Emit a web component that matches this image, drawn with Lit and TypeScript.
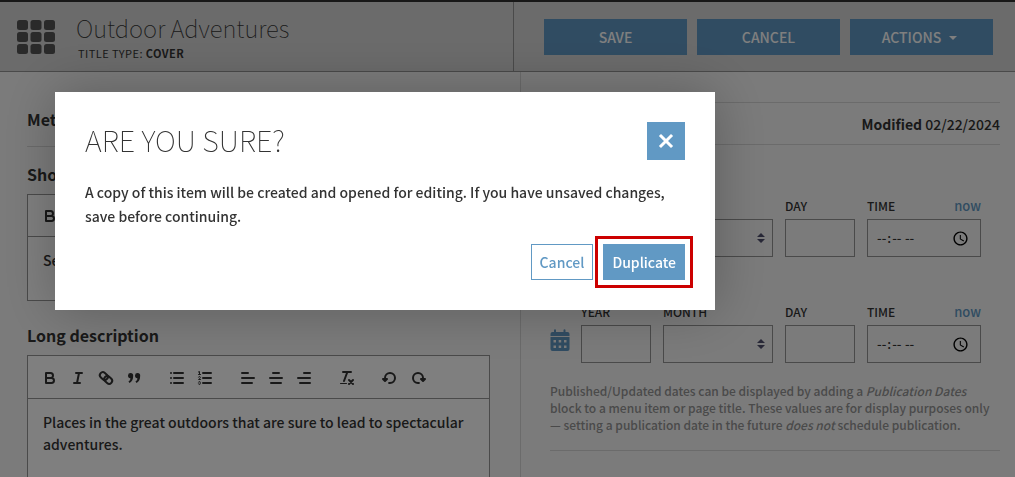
import { LitElement, html, css, svg } from "lit";
import { customElement, property } from "lit/decorators.js";

const editorIcons: Record<string, unknown> = {
  Bold: svg`<path d="M5,4H9.5A2.5,2.5,0,0,1,9.5,9H5ZM5,9h5.5A2.5,2.5,0,0,1,10.5,14H5Z"/>`,
  Italic: svg`<path d="M7,4H13M5,14H11M8,14L10,4"/>`,
  Link: svg`<g transform="rotate(42 9 9)"><rect x="1.8" y="6" width="8.6" height="6" rx="3"/><rect x="7.6" y="6" width="8.6" height="6" rx="3"/></g>`,
  Blockquote: svg`<g class="solid"><path d="M8.2,6.6A2.6,2.6,0,1,0,5.4,9.2C5.4,10.9,4.6,11.9,3.4,12.6L4.6,14C7,12.8,8.2,10.6,8.2,6.6Z"/><path d="M15.2,6.6A2.6,2.6,0,1,0,12.4,9.2C12.4,10.9,11.6,11.9,10.4,12.6L11.6,14C14,12.8,15.2,10.6,15.2,6.6Z"/></g>`,
  "Bulleted list": svg`<path d="M6,4H15M6,9H15M6,14H15M3,4H3M3,9H3M3,14H3"/>`,
  "Numbered list": svg`<path d="M7,4H15M7,9H15M7,14H15"/><path class="thin" d="M2.5,5.5H4.5M2.4,3L3.5,2.5V5.5M4.5,10.5h-2c0-.234,1.85-1.076,1.85-2.234A0.959,0.959,0,0,0,2.5,8.156M2.5,14.846a0.959,0.959,0,0,0,1.85-.109A0.7,0.7,0,0,0,3.75,14a0.688,0.688,0,0,0,.6-0.736,0.959,0.959,0,0,0-1.85-.109"/>`,
  "Align left": svg`<path d="M3,4H9M3,9H15M3,14H13"/>`,
  "Align center": svg`<path d="M6,4H12M3,9H15M4,14H14"/>`,
  "Align right": svg`<path d="M9,4H15M3,9H15M5,14H15"/>`,
  "Clear formatting": svg`<path d="M5,3H13M6,12L9.35,3M11,11L15,15M15,11L11,15"/><path class="thin" d="M2.5,14.5H8.5"/>`,
  Undo: svg`<path class="both" d="M6,10L4,12L2,10Z"/><path d="M8.09,13.91A4.6,4.6,0,0,0,9,14,5,5,0,1,0,4,9"/>`,
  Redo: svg`<path class="both" d="M12,10L14,12L16,10Z"/><path d="M9.91,13.91A4.6,4.6,0,0,1,9,14a5,5,0,1,1,5-5"/>`,
};

const toolGroups = [
  ["Bold", "Italic", "Link", "Blockquote"],
  ["Bulleted list", "Numbered list"],
  ["Align left", "Align center", "Align right"],
  ["Clear formatting"],
  ["Undo", "Redo"],
];

@customElement("rich-editor")
class RichEditor extends LitElement {
  @property() text = "";
  @property() label = "";
  @property({ type: Boolean, reflect: true }) tall = false;

  static styles = css`
    :host {
      display: block;
      border: 1px solid #949494;
      background: #fff;
    }
    .toolbar {
      display: flex;
      flex-wrap: wrap;
      gap: 15px;
      padding: 9px 8px 8px;
      border-bottom: 1px solid #949494;
    }
    :host([tall]) .toolbar {
      padding-top: 10px;
    }
    .group {
      display: flex;
    }
    button {
      width: 28px;
      height: 24px;
      padding: 3px 5px;
      border: 0;
      background: none;
    }
    svg {
      display: block;
      width: 18px;
      height: 18px;
      fill: none;
      stroke: #333;
      stroke-width: 2;
      stroke-linecap: round;
      stroke-linejoin: round;
    }
    .solid {
      fill: #333;
      stroke: none;
    }
    .both {
      fill: #333;
    }
    .thin {
      stroke-width: 1;
    }
    .body {
      min-height: 63px;
      box-sizing: border-box;
      padding: 12px 15px;
      line-height: 22px;
      outline: 0;
    }
    :host([tall]) .body {
      min-height: 160px;
    }
  `;

  render() {
    return html`
      <div class="toolbar" role="toolbar" aria-label=${this.label}>
        ${toolGroups.map(
          (group) => html`<div class="group">
            ${group.map(
              (name) => html`<button type="button" aria-label=${name}>
                <svg viewBox="0 0 18 18" aria-hidden="true">${editorIcons[name]}</svg>
              </button>`
            )}
          </div>`
        )}
      </div>
      <div class="body" contenteditable="true" role="textbox" aria-label=${this.label}>${this.text}</div>
    `;
  }
}

@customElement("date-row")
class DateRow extends LitElement {
  static styles = css`
    :host {
      display: grid;
      grid-template-columns: 19px 70px 110px 70px 114px;
      column-gap: 12px;
      align-items: end;
      font-size: 12px;
      line-height: 26px;
    }
    .icon {
      width: 20px;
      height: 38px;
      fill: #6199c4;
    }
    .field {
      display: grid;
    }
    .top {
      display: flex;
      justify-content: space-between;
    }
    a {
      color: #6199c4;
      font-size: 13px;
      text-decoration: none;
    }
    input,
    select {
      width: 100%;
      height: 38px;
      box-sizing: border-box;
      border: 1px solid #949494;
      border-radius: 0;
      background: transparent;
      font: inherit;
      color: #333;
      margin: 0;
    }
    input[type="time"] {
      padding: 0 11px 0 8px;
      font-size: 13px;
    }
    input::-webkit-calendar-picker-indicator {
      width: 17px;
      height: 17px;
      padding: 0;
      background-size: contain;
    }
    .pick {
      display: grid;
    }
    .pick > * {
      grid-area: 1 / 1;
    }
    select {
      appearance: none;
      padding: 0 24px 0 8px;
    }
    .arrows {
      width: 8px;
      height: 10px;
      place-self: center end;
      margin-right: 8px;
      fill: #50506e;
      pointer-events: none;
    }
  `;

  render() {
    return html`
      <svg class="icon" viewBox="0 0 20 38" aria-hidden="true">
        <path d="M0.5,11V9a2,2,0,0,1,2-2H4V5.2a1,1,0,0,1,2,0V7h7.5V5.2a1,1,0,0,1,2,0V7h2a2,2,0,0,1,2,2v2Z" />
        <path
          fill-rule="evenodd"
          d="M0.5,12H19.5V24a2,2,0,0,1-2,2H2.5a2,2,0,0,1-2-2ZM3.5,15v2.5H6V15ZM8.7,15v2.5h2.5V15ZM14,15v2.5h2.5V15ZM3.5,20.5V23H6V20.5ZM8.7,20.5V23h2.5V20.5ZM14,20.5V23h2.5V20.5Z"
        />
      </svg>
      <div class="field">
        <label for="year">YEAR</label>
        <input id="year" type="text" />
      </div>
      <div class="field">
        <label for="month">MONTH</label>
        <div class="pick">
          <select id="month"><option></option></select>
          <svg class="arrows" viewBox="0 0 8 10" aria-hidden="true"><path d="M0,4L4,0L8,4ZM0,6L4,10L8,6Z" /></svg>
        </div>
      </div>
      <div class="field">
        <label for="day">DAY</label>
        <input id="day" type="text" />
      </div>
      <div class="field">
        <div class="top"><label for="time">TIME</label><a href="#now">now</a></div>
        <input id="time" type="time" />
      </div>
    `;
  }
}

@customElement("app-root")
class AppRoot extends LitElement {
  static styles = css`
    :host {
      display: block;
      position: relative;
      height: 100vh;
      overflow: hidden;
      background: #f7f7f7;
      color: #333;
      font: 500 14px/24px "Noto Sans CJK SC", "Noto Sans", sans-serif;
    }
    header {
      display: grid;
      grid-template-columns: 513fr 502fr;
      border-top: 2px solid #303030;
      border-bottom: 1px solid #949494;
      background: #d6d6d6;
    }
    .brand {
      display: flex;
      gap: 21px;
      padding: 10px 17px;
    }
    .grid-icon {
      width: 38px;
      height: 34px;
      margin-top: 8px;
      fill: #555;
    }
    h1,
    h2,
    h3,
    p {
      margin: 0;
    }
    h1 {
      font-size: 24px;
      line-height: 32px;
      font-weight: 100;
    }
    .type {
      margin-top: 2px;
      padding-left: 2px;
      font-size: 11px;
      line-height: 15px;
      font-weight: 400;
      letter-spacing: 0.04em;
    }
    .actions {
      display: flex;
      gap: 10px;
      padding: 17px 22px 16px 30px;
      border-left: 1px solid #949494;
    }
    button {
      font: inherit;
      border: 1px solid #6199c4;
      border-radius: 0;
      background: #6199c4;
      color: #fff;
    }
    .actions button {
      flex: 1;
      height: 36px;
      padding: 0;
    }
    .caret {
      display: inline-block;
      margin: 0 4px 0 8px;
      vertical-align: 3px;
      border: 4px solid transparent;
      border-top-color: #fff;
      border-bottom: 0;
    }
    main {
      display: grid;
      grid-template-columns: 520fr 495fr;
      min-height: 405px;
    }
    .content {
      padding: 32px 30px 0 27px;
    }
    h2,
    h3 {
      font-size: 16px;
      font-weight: 700;
      line-height: 30px;
    }
    .content h2 {
      padding-bottom: 12px;
      border-bottom: 1px solid #d6d6d6;
      margin-bottom: 12px;
    }
    .content h3 {
      margin-bottom: 5px;
    }
    .content rich-editor {
      margin-bottom: 19px;
    }
    aside {
      padding: 30px 15px 0 29px;
      border-left: 1px solid #d6d6d6;
    }
    .modified {
      padding: 9px 0 8px;
      border: 1px solid #d6d6d6;
      border-width: 1px 0;
      text-align: right;
    }
    .dates {
      display: grid;
      gap: 42px;
      padding: 48px 0 19px;
    }
    .note {
      padding-bottom: 17px;
      border-bottom: 1px solid #d6d6d6;
      color: #949494;
      font-size: 12px;
      line-height: 17px;
    }
    .overlay {
      position: fixed;
      inset: 0;
      padding: 92px 55px;
      background: rgba(0, 0, 0, 0.5);
    }
    .dialog {
      box-sizing: border-box;
      max-width: 660px;
      padding: 30px;
      background: #fff;
      box-shadow: 0 0 50px rgba(0, 0, 0, 0.25);
    }
    .dialog-top {
      display: flex;
      justify-content: space-between;
      margin-bottom: 20px;
    }
    .dialog h2 {
      font-size: 29px;
      line-height: 34px;
      font-weight: 100;
    }
    .close {
      display: grid;
      place-items: center;
      width: 38px;
      height: 38px;
      padding: 0;
    }
    .close svg {
      width: 16px;
      height: 16px;
      fill: none;
      stroke: #fff;
      stroke-width: 3;
      stroke-linecap: square;
    }
    .buttons {
      display: flex;
      justify-content: flex-end;
      gap: 10px;
      margin-top: 16px;
    }
    .buttons button {
      height: 36px;
      padding: 0 8px;
    }
    .buttons .plain {
      background: #fff;
      color: #6199c4;
    }
    .buttons .primary {
      outline: 3px solid #c00;
      outline-offset: 5px;
    }
  `;

  render() {
    return html`
      <header>
        <div class="brand">
          <svg class="grid-icon" viewBox="0 0 38 34" aria-hidden="true">
            ${[0, 1, 2].map((row) =>
              [0, 1, 2].map(
                (col) => svg`<rect x=${col * 13.5} y=${row * 12} width="11" height="10" rx="2.5"/>`
              )
            )}
          </svg>
          <div>
            <h1>Outdoor Adventures</h1>
            <div class="type">TITLE TYPE: <b>COVER</b></div>
          </div>
        </div>
        <div class="actions">
          <button type="button">SAVE</button>
          <button type="button">CANCEL</button>
          <button type="button">ACTIONS<span class="caret"></span></button>
        </div>
      </header>
      <main>
        <section class="content">
          <h2>Metadata</h2>
          <h3>Short description</h3>
          <rich-editor label="Short description" text="See the outdoors"></rich-editor>
          <h3>Long description</h3>
          <rich-editor
            tall
            label="Long description"
            text="Places in the great outdoors that are sure to lead to spectacular adventures."
          ></rich-editor>
        </section>
        <aside>
          <div class="modified"><b>Modified</b> 02/22/2024</div>
          <div class="dates">
            <date-row></date-row>
            <date-row></date-row>
          </div>
          <p class="note">
            Published/Updated dates can be displayed by adding a <em>Publication Dates</em> block to a menu item or
            page title. These values are for display purposes only — setting a publication date in the future
            <em>does not</em> schedule publication.
          </p>
        </aside>
      </main>
      <div class="overlay">
        <div class="dialog" role="dialog" aria-modal="true" aria-labelledby="dialog-title">
          <div class="dialog-top">
            <h2 id="dialog-title">ARE YOU SURE?</h2>
            <button class="close" type="button" aria-label="Close">
              <svg viewBox="0 0 16 16" aria-hidden="true"><path d="M3,3L13,13M13,3L3,13" /></svg>
            </button>
          </div>
          <p>
            A copy of this item will be created and opened for editing. If you have unsaved changes, save before
            continuing.
          </p>
          <div class="buttons">
            <button class="plain" type="button">Cancel</button>
            <button class="primary" type="button">Duplicate</button>
          </div>
        </div>
      </div>
    `;
  }
}
